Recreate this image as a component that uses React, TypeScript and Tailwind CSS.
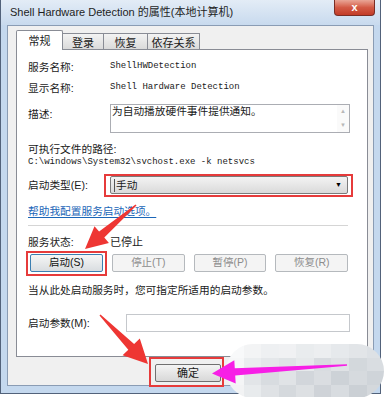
import React from 'react';

const cloud = [
    ['bg-[#f8f9fa]', 'bg-[#f3f4f5]', 'bg-[#eef0f2]', 'bg-[#f0f1f3]', 'bg-[#e9ecee]', 'bg-[#eceef0]', 'bg-[#e6e9ec]', 'bg-[#e2e5e8]', 'bg-[#dde1e5]'],
    ['bg-[#f6f7f8]', 'bg-[#eaedef]', 'bg-[#e4e7ea]', 'bg-[#dfe3e6]', 'bg-[#e6e9eb]', 'bg-[#d8dce0]', 'bg-[#dfe2e5]', 'bg-[#d3d8dc]', 'bg-[#d9dde1]'],
    ['bg-[#f4f5f6]', 'bg-[#e2e5e8]', 'bg-[#d8dce0]', 'bg-[#e0e3e6]', 'bg-[#d2d6db]', 'bg-[#dadde1]', 'bg-[#cdd2d7]', 'bg-[#d6dade]', 'bg-[#cfd4d9]'],
    ['bg-[#f2f3f4]', 'bg-[#e8ebed]', 'bg-[#dfe2e5]', 'bg-[#d5d9dd]', 'bg-[#dde0e3]', 'bg-[#cfd3d8]', 'bg-[#d8dce0]', 'bg-[#cbd0d5]', 'bg-[#d4d8dc]'],
];

function Row({ label, h, children, className = '' }: { label: string; h: string; children?: React.ReactNode; className?: string }) {
    return (
        <div className={`flex ${h} ${className}`}>
            <div className="w-[82px] shrink-0 flex items-center">{label}</div>
            {children}
        </div>
    );
}

function SvcButton({ label, active = false }: { label: string; active?: boolean }) {
    return (
        <div
            className={`w-[73px] h-[18px] flex items-center justify-center rounded-[2px] border text-[10.5px] ${
                active
                    ? 'border-[#3c7fb1] bg-linear-to-b from-[#f6f6f6] to-[#d9dde0] text-[#111]'
                    : 'border-[#b5b9bd] bg-[#f4f4f4] text-[#8c8c8c]'
            }`}
        >
            {label}
        </div>
    );
}

export default function App() {
    return (
        <div className="relative w-[385px] h-[397px] overflow-hidden bg-white text-[#1a1a1a] font-['Liberation_Sans','Noto_Sans_CJK_SC',sans-serif]">
            {/* Window frame */}
            <div className="w-[381px] h-[394px] border-l border-r border-b border-[#52627a] bg-[#c4d8ee] flex flex-col">
                {/* Title bar */}
                <div className="h-[25px] flex justify-between bg-linear-to-b from-[#e3ecf6] to-[#c8daee]">
                    <div className="pl-[9px] pt-[5px] text-[11px] leading-[14px] text-[#1e1e1e]">
                        Shell Hardware Detection 的属性(本地计算机)
                    </div>
                    <div className="mr-[5px] w-[41px] h-[16px] rounded-b-[4px] border border-t-0 border-[#7a2d24] bg-linear-to-b from-[#e9a596] via-[#d35a45] to-[#c23b27] flex items-center justify-center text-white text-[11px] font-bold leading-none">
                        x
                    </div>
                </div>

                {/* Client area */}
                <div className="mx-[6px] h-[361px] border border-[#8a9cb4] bg-[#f0f0f0] pl-[8px] pr-[5px] pt-[4px] text-[10.7px]">
                    {/* Tabs */}
                    <div className="flex items-end h-[19px]">
                        <div className="relative z-10 -mb-px w-[47px] h-[20px] bg-white border border-b-0 border-[#898c95] rounded-t-[2px] flex justify-center pt-[2px] text-[11px]">
                            常规
                        </div>
                        <div className="w-[41px] h-[16px] border border-l-0 border-b-0 border-[#898c95] bg-linear-to-b from-[#f3f3f3] to-[#dadada] flex justify-center pt-[1px] text-[11px]">
                            登录
                        </div>
                        <div className="w-[44px] h-[16px] border border-l-0 border-b-0 border-[#898c95] bg-linear-to-b from-[#f3f3f3] to-[#dadada] flex justify-center pt-[1px] text-[11px]">
                            恢复
                        </div>
                        <div className="w-[52px] h-[16px] border border-l-0 border-b-0 border-[#898c95] bg-linear-to-b from-[#f3f3f3] to-[#dadada] flex justify-center pt-[1px] text-[11px]">
                            依存关系
                        </div>
                    </div>

                    {/* Tab panel */}
                    <div className="h-[308px] border border-[#898c95] bg-white pl-[11px] pr-[19px] pt-[8px]">
                        <Row label="服务名称:" h="h-[18px]">
                            <div className="flex items-center font-['Liberation_Mono',monospace] text-[9px]">ShellHWDetection</div>
                        </Row>
                        <Row label="显示名称:" h="h-[18px]" className="mt-[3px]">
                            <div className="flex items-center font-['Liberation_Mono',monospace] text-[9px]">Shell Hardware Detection</div>
                        </Row>
                        <div className="flex h-[29px] mt-[7px]">
                            <div className="w-[82px] shrink-0 leading-[18px] pt-[1px]">描述:</div>
                            <div className="flex-1 flex border border-[#abadb3] mr-[-2px]">
                                <div className="flex-1 pl-[1px] leading-[13px]">为自动播放硬件事件提供通知。</div>
                                <div className="w-[12px] flex flex-col justify-between items-center py-[2px] text-[6px] text-[#b8b8b8] bg-[#fafafa]">
                                    <span>▲</span>
                                    <span>▼</span>
                                </div>
                            </div>
                        </div>
                        <div className="h-[16px] mt-[8px] flex items-center">可执行文件的路径:</div>
                        <div className="h-[12px] flex items-center font-['Liberation_Mono',monospace] text-[9px]">
                            C:\windows\System32\svchost.exe -k netsvcs
                        </div>
                        <Row label="启动类型(E):" h="h-[18px]" className="mt-[7px]">
                            <div className="relative flex-1">
                                <div className="h-full flex items-center justify-between border border-[#7a7a7a] rounded-[2px] bg-linear-to-b from-[#f3f3f3] to-[#dadada] pl-[3px] pr-[5px]">
                                    <span className="border-l border-[#555] pl-[1px] leading-[13px]">手动</span>
                                    <span className="text-[7px] text-black">▼</span>
                                </div>
                                <div className="absolute -left-[6px] -right-[5px] -top-[2px] -bottom-[3px] border-2 border-[#e63b3b]" />
                            </div>
                        </Row>
                        <div className="h-[16px] mt-[9px] flex items-center">
                            <span className="text-[#1a66b8] underline underline-offset-2">帮助我配置服务启动选项。</span>
                        </div>
                        <div className="mt-[6px] h-px bg-[#d5d5d5]" />
                        <Row label="服务状态:" h="h-[16px]" className="mt-[8px]">
                            <div className="flex items-center text-[11px]">已停止</div>
                        </Row>
                        <div className="mt-[4px] ml-[2px] flex gap-[9px]">
                            <div className="relative">
                                <SvcButton label="启动(S)" active />
                                <div className="absolute -left-[4px] -right-[4px] -top-[3px] -bottom-[4px] border-2 border-[#e63b3b]" />
                            </div>
                            <SvcButton label="停止(T)" />
                            <SvcButton label="暂停(P)" />
                            <SvcButton label="恢复(R)" />
                        </div>
                        <div className="h-[16px] mt-[10px] flex items-center">当从此处启动服务时，您可指定所适用的启动参数。</div>
                        <div className="flex h-[18px] mt-[16px]">
                            <div className="w-[98px] shrink-0 flex items-center">启动参数(M):</div>
                            <div className="flex-1 border border-[#c5c8cc] bg-white mr-[-2px]" />
                        </div>
                    </div>

                    {/* Dialog buttons */}
                    <div className="mt-[7px] flex justify-end gap-[7px] pr-[1px]">
                        <div className="relative">
                            <div className="w-[66px] h-[18px] flex items-center justify-center rounded-[2px] border border-[#707070] bg-linear-to-b from-[#f4f4f4] to-[#d8d8d8] text-[11px]">
                                确定
                            </div>
                            <div className="absolute -left-[6px] -right-[3px] -top-[7px] -bottom-[5px] border-2 border-[#e63b3b]" />
                        </div>
                        <div className="w-[66px] h-[18px] flex items-center justify-center rounded-[2px] border border-[#707070] bg-[#e8e8e8] text-[11px]">
                            取消
                        </div>
                        <div className="w-[66px] h-[18px] flex items-center justify-center rounded-[2px] border border-[#707070] bg-[#e8e8e8] text-[11px]">
                            应用(A)
                        </div>
                    </div>
                </div>
            </div>

            {/* Pixelated cover */}
            <div className="absolute left-[226px] top-[344px] w-[158px] h-[54px] rounded-[27px] overflow-hidden flex flex-col">
                {cloud.map((row, i) => (
                    <div key={i} className="flex flex-1">
                        {row.map((c, j) => (
                            <div key={j} className={`flex-1 ${c}`} />
                        ))}
                    </div>
                ))}
            </div>

            {/* Annotation arrows */}
            <svg className="absolute left-0 top-0 pointer-events-none" width="385" height="397" viewBox="0 0 385 397">
                <polygon
                    points="136.5,205.5 104.3,237.6 108.9,242.9 85,249 94.5,226.3 99.1,231.6 135.5,204.5"
                    fill="#ee3633"
                />
                <polygon
                    points="99.5,315.5 128.3,349.7 122.6,355.3 148,364 139.8,338.5 134.1,344.1 100.5,314.5"
                    fill="#ee3633"
                />
                <polygon
                    points="347,365.8 235.2,375.4 235.7,383.5 212,373.5 234.3,360.2 234.8,368.2 347,364.2"
                    fill="#f71fe6"
                />
            </svg>
        </div>
    );
}
